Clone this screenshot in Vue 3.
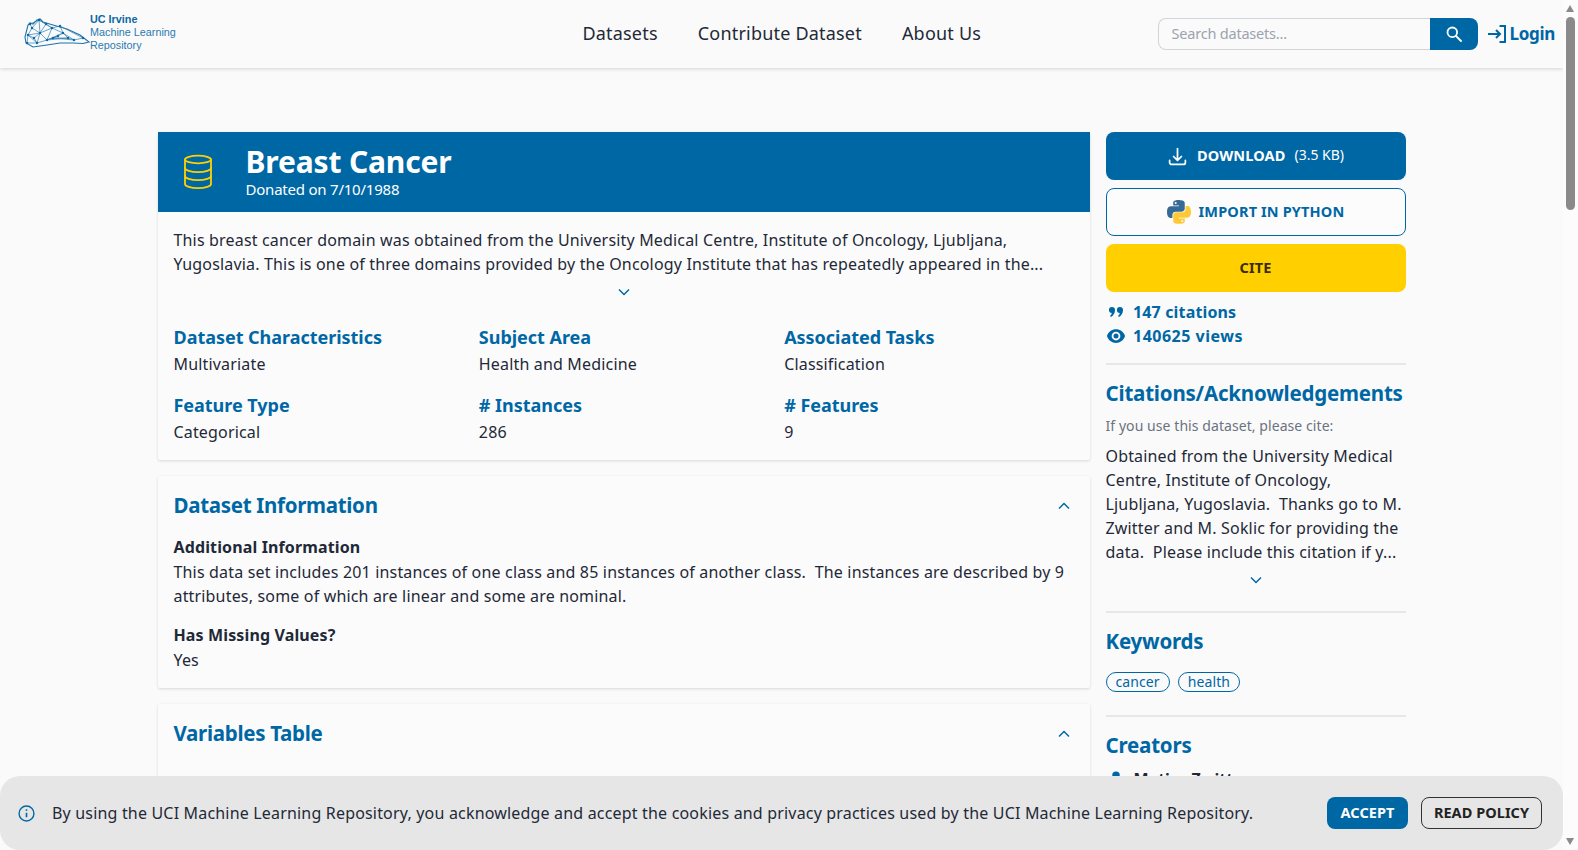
<script setup>
const stats = [
  { label: 'Dataset Characteristics', value: 'Multivariate' },
  { label: 'Subject Area', value: 'Health and Medicine' },
  { label: 'Associated Tasks', value: 'Classification' },
  { label: 'Feature Type', value: 'Categorical' },
  { label: '# Instances', value: '286' },
  { label: '# Features', value: '9' }
]
const nav = ['Datasets', 'Contribute Dataset', 'About Us']
const citeLines = [
  'Obtained from the University Medical',
  'Centre, Institute of Oncology,',
  'Ljubljana, Yugoslavia.  Thanks go to M.',
  'Zwitter and M. Soklic for providing the',
  'data.  Please include this citation if y...'
]
const nodes = [[28,35],[32,28],[40,33],[52,28],[63,33],[68,38],[74,40],[83,38],[47,40],[37,43],[27,43],[39,20],[30,24],[53,38],[60,26],[46,24],[34,38],[58,36]]
const edges = [[0,1],[1,2],[0,2],[2,3],[3,4],[4,5],[5,6],[6,7],[2,8],[8,9],[9,10],[0,10],[2,9],[0,9],[3,8],[8,4],[4,6],[8,5],[1,11],[11,2],[11,3],[12,1],[12,11],[8,13],[13,5],[3,14],[14,4],[14,7],[13,6],[15,2],[15,11],[15,3],[16,0],[16,2],[16,9],[17,4],[17,13],[17,8]]
</script>

<template>
  <div class="app">
    <div class="page">
      <header class="topbar">
        <div class="logo">
          <svg class="mesh" viewBox="24 17 67 33" width="67" height="33" fill="none" stroke="#2f7fb5">
            <path stroke="#1f74ad" stroke-width="1.100" d="M25 37 L28 25 L30 23 L33 24 L37 20 L40 19 L43 22 L53 25 L67 29 L80 35 L89 42 L83 43.500 L73 43 L60 43 L47 45 L33 47 L26 43 Z" />
            <line v-for="(e, i) in edges" :key="i" stroke-width=".7" :x1="nodes[e[0]][0]" :y1="nodes[e[0]][1]" :x2="nodes[e[1]][0]" :y2="nodes[e[1]][1]" />
            <circle v-for="(n, i) in nodes" :key="'n' + i" :cx="n[0]" :cy="n[1]" r="1.200" fill="#0b67a5" stroke="none" />
          </svg>
          <div class="logo-text">
            <strong>UC Irvine</strong>
            <span>Machine Learning</span>
            <span>Repository</span>
          </div>
        </div>
        <nav class="nav">
          <a v-for="item in nav" :key="item">{{ item }}</a>
        </nav>
        <div class="tools">
          <div class="search">
            <div class="search-input">Search datasets...</div>
            <button class="search-btn">
              <svg viewBox="0 0 16 16" width="16" height="16" fill="none" stroke="#fff" stroke-width="1.800">
                <circle cx="6.300" cy="6.300" r="4.800" />
                <path d="M10 10 L15 15" stroke-linecap="round" />
              </svg>
            </button>
          </div>
          <a class="login">
            <svg viewBox="0 0 18 18" width="18" height="18" fill="none" stroke="#0067a5" stroke-width="2">
              <path d="M11.500 1 H17 V17 H11.500 M0 9 H12 M8 5 L12 9 L8 13" />
            </svg>
            Login
          </a>
        </div>
      </header>

      <main class="main">
        <section class="left">
          <div class="card">
            <div class="banner">
              <svg class="db" viewBox="0 0 30 36" width="30" height="36" fill="none" stroke="#ffcf00" stroke-width="1.800" stroke-linecap="round" stroke-linejoin="round">
                <ellipse cx="15" cy="5.500" rx="13" ry="3.800" />
                <path d="M2 5.500V30c0 2.300 5.800 4.200 13 4.200S28 32.300 28 30V5.500" />
                <path d="M2 14c0 2.300 5.800 4.200 13 4.200S28 16.300 28 14" />
                <path d="M2 22c0 2.300 5.800 4.200 13 4.200S28 24.300 28 22" />
              </svg>
              <div>
                <h1>Breast Cancer</h1>
                <p>Donated on 7/10/1988</p>
              </div>
            </div>
            <div class="summary">
              <p class="body">This breast cancer domain was obtained from the University Medical Centre, Institute of Oncology, Ljubljana,<br>Yugoslavia. This is one of three domains provided by the Oncology Institute that has repeatedly appeared in the...</p>
              <div class="more">
                <svg viewBox="0 0 24 24" width="16" height="16" fill="none" stroke="#0067a5" stroke-width="2.200"><path d="m19.500 8.250-7.500 7.500-7.500-7.500" /></svg>
              </div>
              <div class="stats">
                <div v-for="s in stats" :key="s.label">
                  <h3>{{ s.label }}</h3>
                  <p class="body">{{ s.value }}</p>
                </div>
              </div>
            </div>
          </div>

          <div class="card info">
            <div class="card-head">
              <h2>Dataset Information</h2>
              <svg viewBox="0 0 24 24" width="16" height="16" fill="none" stroke="#0067a5" stroke-width="2.200"><path d="m4.500 15.750 7.500-7.500 7.500 7.500" /></svg>
            </div>
            <div class="info-block">
              <h4>Additional Information</h4>
              <p class="body">This data set includes 201 instances of one class and 85 instances of another class.&nbsp; The instances are described by 9<br>attributes, some of which are linear and some are nominal.</p>
            </div>
            <div class="info-block">
              <h4>Has Missing Values?</h4>
              <p class="body">Yes</p>
            </div>
          </div>

          <div class="card info">
            <div class="card-head">
              <h2>Variables Table</h2>
              <svg viewBox="0 0 24 24" width="16" height="16" fill="none" stroke="#0067a5" stroke-width="2.200"><path d="m4.500 15.750 7.500-7.500 7.500 7.500" /></svg>
            </div>
          </div>
        </section>

        <aside class="side">
          <button class="btn primary">
            <svg viewBox="0 0 24 24" width="21" height="21" fill="none" stroke="#fff" stroke-width="2" stroke-linecap="round" stroke-linejoin="round">
              <path d="M3 16.500v2.250A2.250 2.250 0 0 0 5.250 21h13.500A2.250 2.250 0 0 0 21 18.750V16.500M16.500 12 12 16.500m0 0L7.500 12m4.500 4.500V3" />
            </svg>
            <b>DOWNLOAD</b><span class="size">(3.5 KB)</span>
          </button>
          <button class="btn outline">
            <svg viewBox="0 0 256 255" width="24" height="24">
              <path fill="#366a96" d="M126.900 0C62 0 66 28.200 66 28.200l.1 29.200h62v8.800H41.500S0 61.500 0 127.100s36.200 63.300 36.200 63.300h21.600v-30.400s-1.200-36.200 35.600-36.200h61.400s34.500.6 34.500-33.300V34.300S195 0 126.900 0zM92.800 19.600a11.100 11.100 0 1 1 0 22.200 11.100 11.100 0 0 1 0-22.200z" />
              <path fill="#ffc836" d="M128.800 254.100c64.900 0 60.900-28.100 60.900-28.100l-.1-29.200h-62V188h86.600s41.500 4.700 41.500-60.800-36.200-63.300-36.200-63.300h-21.600v30.400s1.200 36.200-35.600 36.200h-61.400s-34.500-.6-34.500 33.300v56S61 254.100 128.800 254.100zm34.100-19.600a11.100 11.100 0 1 1 0-22.200 11.100 11.100 0 0 1 0 22.200z" />
            </svg>
            <b>IMPORT IN PYTHON</b>
          </button>
          <button class="btn cite"><b>CITE</b></button>

          <div class="metrics">
            <div class="metric">
              <span class="metric-icon">
                <svg viewBox="0 0 14 10" width="14" height="10" fill="#0067a5">
                  <path d="M3 0a3 3 0 0 1 3 3C6 6 4.500 8.500 2 10L1 9c1-.8 1.600-1.800 1.800-3A3 3 0 0 1 3 0Z" />
                  <path d="M11 0a3 3 0 0 1 3 3c0 3-1.500 5.500-4 7L9 9c1-.8 1.600-1.800 1.800-3A3 3 0 0 1 11 0Z" />
                </svg>
              </span>
              147 citations
            </div>
            <div class="metric views">
              <span class="metric-icon">
                <svg viewBox="0 0 24 24" width="20" height="20" fill="#0067a5">
                  <path d="M12 15a3 3 0 1 0 0-6 3 3 0 0 0 0 6Z" />
                  <path fill-rule="evenodd" d="M1.323 11.447C2.811 6.976 7.028 3.750 12.001 3.750c4.970 0 9.185 3.223 10.675 7.690.12.362.12.752 0 1.113-1.487 4.471-5.705 7.697-10.677 7.697-4.970 0-9.186-3.223-10.675-7.690a1.762 1.762 0 0 1 0-1.113ZM17.250 12a5.250 5.250 0 1 1-10.500 0 5.250 5.250 0 0 1 10.500 0Z" />
                </svg>
              </span>
              140625 views
            </div>
          </div>

          <hr class="rule first">
          <h2 class="side-title">Citations/Acknowledgements</h2>
          <p class="cite-hint">If you use this dataset, please cite:</p>
          <p class="body cite-text"><span v-for="l in citeLines" :key="l">{{ l }}</span></p>
          <div class="more side-more">
            <svg viewBox="0 0 24 24" width="16" height="16" fill="none" stroke="#0067a5" stroke-width="2.200"><path d="m19.500 8.250-7.500 7.500-7.500-7.500" /></svg>
          </div>
          <hr class="rule">
          <h2 class="side-title">Keywords</h2>
          <div class="tags">
            <span class="tag">cancer</span>
            <span class="tag">health</span>
          </div>
          <hr class="rule">
          <h2 class="side-title">Creators</h2>
          <div class="creator">
            <svg viewBox="0 0 24 24" width="20" height="20" fill="#0067a5"><path d="M12 3a4.500 4.500 0 1 1 0 9 4.500 4.500 0 0 1 0-9ZM4 20.500C4.500 16 8 14 12 14s7.500 2 8 6.500Z" /></svg>
            <b>Matjaz Zwitter</b>
          </div>
        </aside>
      </main>

      <div class="cookie">
        <svg viewBox="0 0 16 16" width="17" height="17" fill="none" stroke="#0067a5" stroke-width="1.300">
          <circle cx="8" cy="8" r="7" />
          <path d="M8 7.300V11.500" stroke-width="1.500" />
          <circle cx="8" cy="4.800" r=".9" fill="#0067a5" stroke="none" />
        </svg>
        <p>By using the UCI Machine Learning Repository, you acknowledge and accept the cookies and privacy practices used by the UCI Machine Learning Repository.</p>
        <button class="ck accept">ACCEPT</button>
        <button class="ck policy">READ POLICY</button>
      </div>
    </div>

    <div class="scrollbar">
      <span class="arrow up"></span>
      <span class="thumb"></span>
      <span class="arrow down"></span>
    </div>
  </div>
</template>

<style scoped>
.app {
  display: flex;
  height: 850px;
  overflow: hidden;
  background: #fafafa;
  color: #1f2937;
  font-family: "Noto Sans", "Open Sans", sans-serif;
  font-size: 16px;
  line-height: 24px;
}
.page {
  position: relative;
  flex: 1;
  min-width: 0;
  overflow: hidden;
}
h1, h2, h3, h4, p { margin: 0; }
button { border: 0; font: inherit; padding: 0; box-sizing: border-box; }
.body { letter-spacing: .17px; white-space: nowrap; }

.topbar {
  position: relative;
  display: flex;
  align-items: center;
  justify-content: space-between;
  height: 68px;
  padding: 0 8px 0 25px;
  background: #fafafa;
  box-shadow: 0 1px 4px rgba(0,0,0,.16);
}
.logo { display: flex; align-items: center; width: 400px; margin-top: -3px; }
.mesh { flex: none; margin: 2px 0 0 -1px; }
.logo-text {
  display: flex;
  flex-direction: column;
  font-family: "Liberation Sans", sans-serif;
  font-size: 10.800px;
  line-height: 13px;
  color: #2a7ab0;
  margin-left: -1px;
}
.logo-text strong { color: #0b67a5; }
.nav { display: flex; gap: 40px; font-size: 18px; letter-spacing: .2px; margin: -2px 0 0 -20px; }
.tools { display: flex; align-items: center; gap: 10px; }
.search { display: flex; height: 32px; }
.search-input {
  box-sizing: border-box;
  width: 272px;
  border: 1px solid #d1d5db;
  border-right: 0;
  border-radius: 8px 0 0 8px;
  padding-left: 12px;
  font-size: 14.500px;
  line-height: 28px;
  color: #9ca3af;
  letter-spacing: -.2px;
}
.search-btn {
  display: flex;
  align-items: center;
  justify-content: center;
  width: 48px;
  background: #0067a5;
  border-radius: 0 8px 8px 0;
}
.login {
  display: flex;
  align-items: center;
  gap: 3px;
  color: #0067a5;
  font-size: 17px;
  font-weight: 700;
  letter-spacing: -.3px;
}

.main {
  display: flex;
  gap: 16px;
  width: 1248px;
  margin: 64px auto 0;
}
.left { width: 932px; display: flex; flex-direction: column; gap: 16px; }
.side { width: 300px; flex: none; }
.card {
  background: #fbfbfc;
  box-shadow: 0 1px 3px rgba(0,0,0,.14);
  border-radius: 2px;
}
.banner {
  display: flex;
  align-items: center;
  height: 80px;
  background: #0067a5;
  color: #fff;
}
.db { margin: 0 33px 0 25px; flex: none; }
.banner h1 { font-size: 30px; line-height: 32px; font-weight: 700; letter-spacing: -.16px; }
.banner p { line-height: 20px; font-size: 15px; letter-spacing: -.22px; margin-top: 1px; }
.summary { padding: 16px 16px 15px; }
.more { display: flex; justify-content: center; height: 24px; padding-top: 8px; }
.stats {
  display: grid;
  grid-template-columns: repeat(3, 1fr);
  column-gap: 16px;
  row-gap: 14px;
  margin-top: 15px;
}
.stats h3 {
  font-size: 18px;
  line-height: 28px;
  font-weight: 700;
  color: #0067a5;
  letter-spacing: -.03px;
  white-space: nowrap;
}
.stats .body { margin-top: 1px; line-height: 25px; }

.info { padding: 16px; }
.card-head {
  display: flex;
  align-items: center;
  justify-content: space-between;
  height: 28px;
  padding-right: 2px;
  margin-bottom: 16px;
}
.card-head h2 { font-size: 20.500px; font-weight: 700; color: #0067a5; letter-spacing: -.3px; margin-bottom: 2px; }
.info-block { margin-bottom: 16px; }
.info-block:last-child { margin-bottom: 0; }
.info-block h4 { font-size: 16px; font-weight: 700; letter-spacing: .13px; margin: -1px 0 1px; }

.btn {
  display: flex;
  align-items: center;
  justify-content: center;
  width: 100%;
  height: 48px;
  border-radius: 8px;
  margin-bottom: 8px;
  padding-bottom: 2px;
  font-size: 14.500px;
  letter-spacing: .15px;
}
.btn b { font-weight: 700; }
.primary { background: #0067a5; color: #fff; gap: 9px; }
.primary svg { margin-top: 2px; }
.size { font-size: 14px; letter-spacing: 0; }
.outline { background: #fcfcfc; border: 1px solid #0067a5; color: #0067a5; gap: 8px; }
.outline svg { margin-top: 2px; }
.cite { background: #ffcf00; color: #3a2c05; }
.metrics { margin-top: 8px; }
.metric {
  display: flex;
  align-items: center;
  height: 24px;
  color: #0067a5;
  font-weight: 700;
  letter-spacing: .15px;
}
.views { letter-spacing: .5px; }
.metric-icon { display: flex; justify-content: center; width: 20px; margin-right: 7.500px; }
.rule { border: 0; height: 2px; background: #e5e7eb; margin: 16px 0 14px; }
.rule.first { margin: 15px 0 14px; }
.side-title { font-size: 20.500px; line-height: 28px; font-weight: 700; color: #0067a5; letter-spacing: -.2px; white-space: nowrap; }
.cite-hint { font-size: 14px; line-height: 20px; color: #6b7280; letter-spacing: .07px; margin-top: 9px; }
.cite-text { margin-top: 8px; }
.cite-text span { display: block; white-space: pre; }
.side-more { height: 23px; }
.tags { display: flex; gap: 8px; margin: 17px 0 23px; }
.tag {
  box-sizing: border-box;
  height: 20px;
  padding: 0 9px;
  border: 1px solid #0067a5;
  border-radius: 10px;
  color: #0067a5;
  font-size: 14px;
  line-height: 17px;
  letter-spacing: .1px;
}
.creator { display: flex; align-items: center; gap: 8px; margin-top: 8px; }

.cookie {
  position: absolute;
  left: 0;
  right: 0;
  bottom: 0;
  height: 74px;
  display: flex;
  align-items: center;
  padding: 0 21px 0 18px;
  background: #e6e6e6;
  border-radius: 20px;
}
.cookie p { flex: 1; margin-left: 17px; letter-spacing: .18px; white-space: nowrap; }
.ck {
  height: 32px;
  border-radius: 8px;
  padding-bottom: 2px;
  font-size: 14.500px;
  font-weight: 700;
  letter-spacing: .05px;
}
.accept { width: 81px; background: #0067a5; color: #fff; }
.policy { width: 121px; margin-left: 13px; background: transparent; border: 1px solid #333; color: #222; }

.scrollbar {
  position: relative;
  flex: none;
  width: 15px;
  background: #fcfcfc;
}
.thumb {
  position: absolute;
  top: 17px;
  left: 3px;
  width: 9px;
  height: 193px;
  border-radius: 5px;
  background: #8a8a8a;
}
.arrow {
  position: absolute;
  left: 3px;
  width: 0;
  height: 0;
  border-left: 4.500px solid transparent;
  border-right: 4.500px solid transparent;
}
.up { top: 5px; border-bottom: 7px solid #8a8a8a; }
.down { bottom: 5px; border-top: 7px solid #8a8a8a; }
</style>

<style>
html, body { margin: 0; overflow: hidden; background: #fafafa; }
</style>
